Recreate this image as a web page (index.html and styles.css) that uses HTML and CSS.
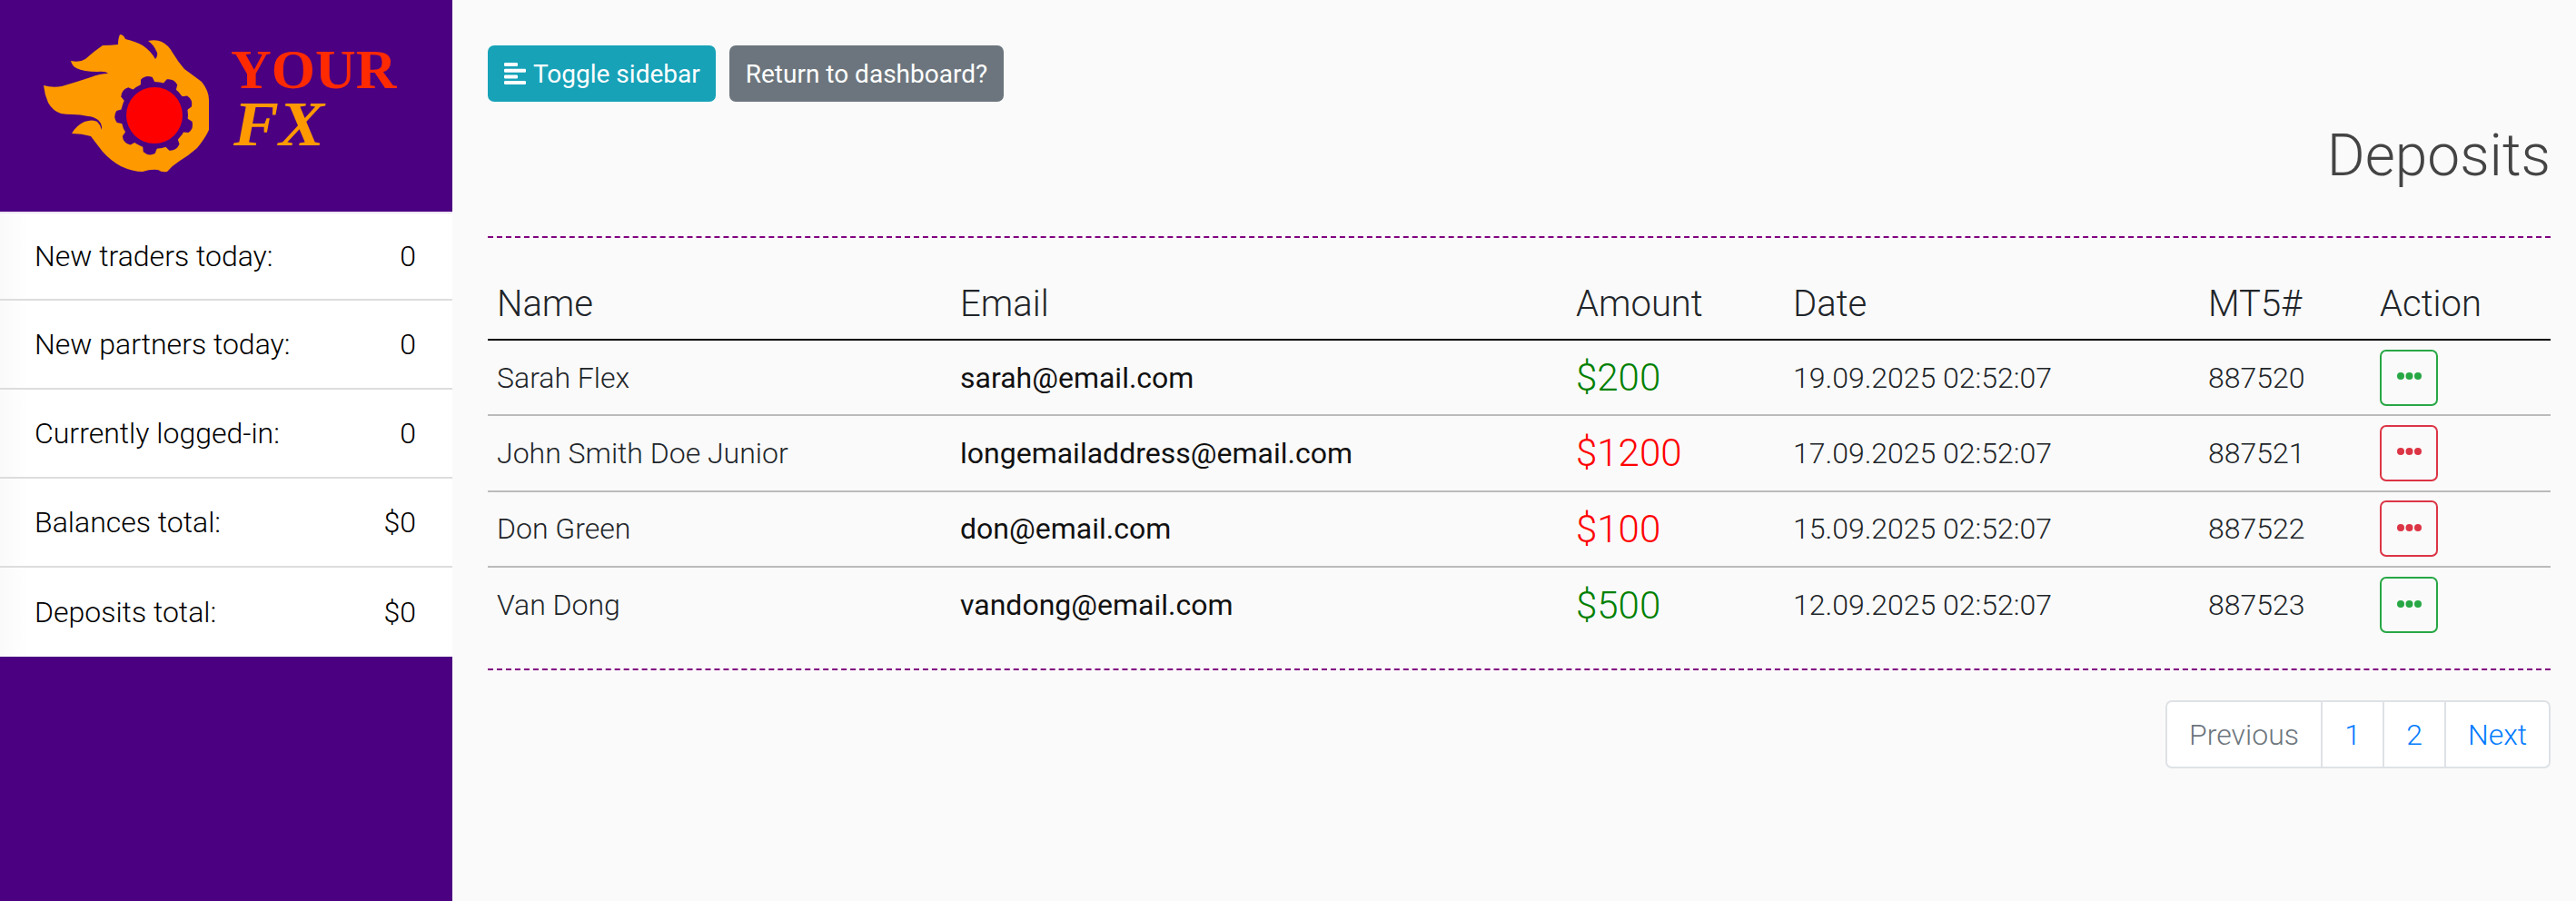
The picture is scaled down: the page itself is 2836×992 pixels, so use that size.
FILE: index.html
```html
<!DOCTYPE html>
<html lang="en">
<head>
<meta charset="utf-8">
<title>Deposits</title>
<link rel="stylesheet" href="styles.css">
</head>
<body>
<div class="wrapper">
  <nav class="sidebar">
    <div class="sidebar-header">
      <svg class="logo" viewBox="0 0 498 233" width="498" height="233" role="img" aria-label="Your FX">
        <path class="flame" d="M48 94 Q58 97 68 95 Q85 90 100 85 Q110 81 119 81 Q116 78 107 79 Q92 79 84 75 Q79 72 78 67 Q88 69 94 65 Q104 56 113 50 Q122 50 130 49 Q130 42 132 38 Q136 38 138 43 Q150 46 157 50 Q166 56 171 65 Q175 60 172 56 Q169 49 163 45 Q172 43 178 46 Q186 50 190 58 Q196 68 203 76 Q214 84 222 90 Q230 100 230 110 L230 143 Q226 152 217 163 Q208 171 198 177 Q190 182 184 189 Q178 190 174 187 Q166 186 157 189 Q146 189 133 183 Q122 177 113 167 Q106 158 100 150 Q90 147 79 147 Q84 138 93 134 Q102 131 107 134 Q111 138 112 143 Q113 137 108 132 Q102 128 97 128 Q88 126 80 126 Q72 126 67 125 Q58 122 53 113 Q49 104 48 94 Z"/>
        <g class="gear">
          <circle cx="170" cy="127" r="37"/>
          <path class="tooth" d="M160 100 L163.5 85.5 Q170 81 176.5 85.5 L180 100 Z" transform="rotate(-12 170 127)"/>
          <path class="tooth" d="M160 100 L163.5 85.5 Q170 81 176.5 85.5 L180 100 Z" transform="rotate(28 170 127)"/>
          <path class="tooth" d="M160 100 L163.5 85.5 Q170 81 176.5 85.5 L180 100 Z" transform="rotate(68 170 127)"/>
          <path class="tooth" d="M160 100 L163.5 85.5 Q170 81 176.5 85.5 L180 100 Z" transform="rotate(108 170 127)"/>
          <path class="tooth" d="M160 100 L163.5 85.5 Q170 81 176.5 85.5 L180 100 Z" transform="rotate(148 170 127)"/>
          <path class="tooth" d="M160 100 L163.5 85.5 Q170 81 176.5 85.5 L180 100 Z" transform="rotate(188 170 127)"/>
          <path class="tooth" d="M160 100 L163.5 85.5 Q170 81 176.5 85.5 L180 100 Z" transform="rotate(228 170 127)"/>
          <path class="tooth" d="M160 100 L163.5 85.5 Q170 81 176.5 85.5 L180 100 Z" transform="rotate(268 170 127)"/>
          <path class="tooth" d="M160 100 L163.5 85.5 Q170 81 176.5 85.5 L180 100 Z" transform="rotate(308 170 127)"/>
        </g>
        <circle class="gear-core" cx="170" cy="127" r="31"/>
        <text class="logo-your" x="254" y="97">YOUR</text>
        <text class="logo-fx" x="257" y="160" textLength="100" lengthAdjust="spacingAndGlyphs">FX</text>
      </svg>
    </div>
    <ul class="stats">
      <li class="stat"><span>New traders today:</span><span>0</span></li>
      <li class="stat"><span>New partners today:</span><span>0</span></li>
      <li class="stat"><span>Currently logged-in:</span><span>0</span></li>
      <li class="stat"><span>Balances total:</span><span>$0</span></li>
      <li class="stat"><span>Deposits total:</span><span>$0</span></li>
    </ul>
  </nav>
  <main class="content">
    <div class="toolbar">
      <button class="btn btn-info" type="button">
        <svg class="btn-icon" viewBox="0 0 24 24" width="24" height="24" aria-hidden="true">
          <rect x="0" y="0" width="15" height="4" rx="1.2"/>
          <rect x="0" y="6.7" width="24" height="4" rx="1.2"/>
          <rect x="0" y="13.4" width="15" height="4" rx="1.2"/>
          <rect x="0" y="20" width="24" height="4" rx="1.2"/>
        </svg>Toggle sidebar</button>
      <button class="btn btn-secondary" type="button">Return to dashboard?</button>
    </div>
    <h1 class="title">Deposits</h1>
    <div class="table-wrap">
      <table class="deposits">
        <thead>
          <tr><th class="c-name">Name</th><th class="c-email">Email</th><th class="c-amount">Amount</th><th class="c-date">Date</th><th class="c-mt5">MT5#</th><th class="c-action">Action</th></tr>
        </thead>
        <tbody>
          <tr>
            <td>Sarah Flex</td><td class="email">sarah@email.com</td><td class="amount pos">$200</td><td>19.09.2025 02:52:07</td><td>887520</td>
            <td><button class="dots pos-btn" type="button" aria-label="Actions"><svg viewBox="0 0 27 8" width="27" height="8"><circle cx="4" cy="4" r="4"/><circle cx="13.5" cy="4" r="4"/><circle cx="23" cy="4" r="4"/></svg></button></td>
          </tr>
          <tr>
            <td>John Smith Doe Junior</td><td class="email">longemailaddress@email.com</td><td class="amount neg">$1200</td><td>17.09.2025 02:52:07</td><td>887521</td>
            <td><button class="dots neg-btn" type="button" aria-label="Actions"><svg viewBox="0 0 27 8" width="27" height="8"><circle cx="4" cy="4" r="4"/><circle cx="13.5" cy="4" r="4"/><circle cx="23" cy="4" r="4"/></svg></button></td>
          </tr>
          <tr>
            <td>Don Green</td><td class="email">don@email.com</td><td class="amount neg">$100</td><td>15.09.2025 02:52:07</td><td>887522</td>
            <td><button class="dots neg-btn" type="button" aria-label="Actions"><svg viewBox="0 0 27 8" width="27" height="8"><circle cx="4" cy="4" r="4"/><circle cx="13.5" cy="4" r="4"/><circle cx="23" cy="4" r="4"/></svg></button></td>
          </tr>
          <tr>
            <td>Van Dong</td><td class="email">vandong@email.com</td><td class="amount pos">$500</td><td>12.09.2025 02:52:07</td><td>887523</td>
            <td><button class="dots pos-btn" type="button" aria-label="Actions"><svg viewBox="0 0 27 8" width="27" height="8"><circle cx="4" cy="4" r="4"/><circle cx="13.5" cy="4" r="4"/><circle cx="23" cy="4" r="4"/></svg></button></td>
          </tr>
        </tbody>
      </table>
    </div>
    <div class="pager-row">
      <ul class="pager">
        <li class="page disabled prev">Previous</li>
        <li class="page one">1</li>
        <li class="page two">2</li>
        <li class="page next">Next</li>
      </ul>
    </div>
  </main>
</div>
</body>
</html>
```
FILE: styles.css
```css
* { box-sizing: border-box; }
html, body { margin: 0; padding: 0; }
body {
  background: #fafafa;
  color: #212529;
  font-family: Roboto, "Liberation Sans", sans-serif;
  font-size: 29px;
  font-weight: 300;
}
.wrapper { display: flex; height: 992px; overflow: hidden; }

/* Sidebar */
.sidebar { width: 498px; flex: none; background: #4b0082; }
.sidebar-header { height: 233px; }
.logo { display: block; }
.flame { fill: #ff9900; }
.gear { fill: #4b0082; }
.gear-core { fill: #ff0000; }
.logo-your { fill: #ff2a00; font: bold 62px "Liberation Serif", serif; }
.logo-fx { fill: #ff9900; font: italic bold 70px "Liberation Serif", serif; }

.stats { list-style: none; margin: 0; padding: 0; }
.stat {
  display: flex;
  justify-content: space-between;
  align-items: center;
  height: 98px;
  padding: 0 40px 0 38px;
  background: linear-gradient(90deg, #fafafa, #fff 30px);
  border-bottom: 2px solid #dddddd;
  color: #000;
  font-size: 32px;
}
.stat:first-child { border-top: 2px solid #ece6f3; }
.stat:last-child { border-bottom: 0; }

/* Main */
.content { flex: 1; min-width: 0; padding: 50px 28px 0 39px; }
.toolbar { display: flex; gap: 15px; }
.btn {
  display: flex;
  align-items: center;
  height: 62px;
  padding: 0 18px;
  border: 0;
  border-radius: 7px;
  color: #fff;
  font-family: inherit;
  font-size: 28px;
  font-weight: 400;
  white-space: nowrap;
}
.btn-info { background: #17a2b8; padding-right: 17px; }
.btn-secondary { background: #6c757d; }
.btn-icon { flex: none; margin-right: 8px; fill: #fff; }
.title {
  margin: 0;
  height: 148px;
  padding-top: 21px;
  line-height: 78px;
  color: #444;
  font-size: 64px;
  font-weight: 300;
  text-align: right;
}
.table-wrap {
  border-top: 2px dashed #800080;
  border-bottom: 2px dashed #800080;
  padding-bottom: 29px;
}
.deposits { width: 100%; table-layout: fixed; border-collapse: collapse; }
.deposits th {
  height: 112px;
  padding: 33px 10px 0;
  border-bottom: 2px solid #000;
  font-size: 40px;
  font-weight: 300;
  text-align: left;
  color: #212529;
}
.c-name { width: 510px; }
.c-email { width: 678px; }
.c-amount { width: 239px; }
.c-date { width: 457px; }
.c-mt5 { width: 189px; }
.deposits td {
  height: 83.3px;
  padding: 0 10px;
  border-bottom: 2px solid #bbb;
  font-size: 32px;
  vertical-align: middle;
}
.deposits tr:last-child td { border-bottom: 0; }
.deposits td.email { font-weight: 400; color: #111; }
.deposits td.amount { font-size: 42px; }
.pos { color: #008000; }
.neg { color: #ff0000; }
.dots {
  display: flex;
  align-items: center;
  justify-content: center;
  width: 64px;
  height: 62px;
  padding: 0;
  background: transparent;
  border: 2px solid;
  border-radius: 7px;
}
.dots svg { fill: currentColor; margin-top: -3px; }
.pos-btn { color: #28a745; }
.neg-btn { color: #dc3545; }

/* Pagination */
.pager-row { display: flex; justify-content: flex-end; margin-top: 33px; }
.pager { display: flex; list-style: none; margin: 0; padding: 0; background: #fff; border: 2px solid #dee2e6; border-radius: 7px; height: 75px; }
.page {
  display: flex;
  align-items: center;
  justify-content: center;
  border-left: 2px solid #dee2e6;
  color: #007bff;
  font-size: 32px;
  font-weight: 300;
}
.page:first-child { border-left: 0; }
.prev { width: 169px; color: #6c757d; }
.one, .two { width: 68px; }
.next { width: 115px; }
```
